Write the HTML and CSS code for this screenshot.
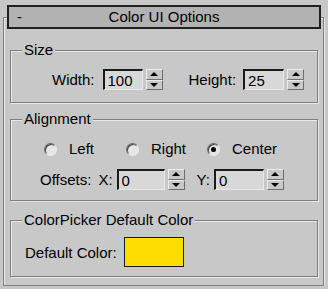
FILE: index.html
```html
<!DOCTYPE html>
<html>
<head>
    <title>Color UI Options</title>
    <link rel="stylesheet" href="styles.css">
</head>
<body>
    <div class="rollout">
        <div class="rollout-title">
            <span class="collapse">-</span>
            <span class="title-text">Color UI Options</span>
        </div>

        <div class="group group-size">
            <div class="group-label">Size</div>
            <div class="row">
                <span class="label lbl-width">Width:</span>
                <input type="text" class="field f-width" value="100">
                <div class="spinner"><div class="spin up"></div><div class="spin down"></div></div>
                <span class="label lbl-height">Height:</span>
                <input type="text" class="field f-height" value="25">
                <div class="spinner"><div class="spin up"></div><div class="spin down"></div></div>
            </div>
        </div>

        <div class="group group-align">
            <div class="group-label">Alignment</div>
            <div class="radios">
                <label class="radio"><input type="radio" name="align"><span>Left</span></label>
                <label class="radio"><input type="radio" name="align"><span>Right</span></label>
                <label class="radio"><input type="radio" name="align" checked><span>Center</span></label>
            </div>
            <div class="row offsets">
                <span class="label lbl-offsets">Offsets:</span>
                <span class="label lbl-x">X:</span>
                <input type="text" class="field f-x" value="0">
                <div class="spinner"><div class="spin up"></div><div class="spin down"></div></div>
                <span class="label lbl-y">Y:</span>
                <input type="text" class="field f-y" value="0">
                <div class="spinner"><div class="spin up"></div><div class="spin down"></div></div>
            </div>
        </div>

        <div class="group group-color">
            <div class="group-label">ColorPicker Default Color</div>
            <div class="row color-row">
                <span class="label lbl-color">Default Color:</span>
                <div class="swatch"></div>
            </div>
        </div>
    </div>
</body>
</html>
```

FILE: styles.css
```css
body {
    margin: 0;
    background: #c8c8c8;
    color: #000;
    font-family: "Liberation Sans", Arial, sans-serif;
    font-size: 15px;
}
.rollout {
    margin: 17px 4px 0 3px;
    padding-bottom: 8px;
    border: 1px solid #7f7f7f;
    box-shadow: inset 1px 1px 0 #e8e8e8, 1px 1px 0 #e8e8e8;
}
.rollout-title {
    margin: -13px 2px 0 3px;
    height: 20px;
    line-height: 20px;
    border: 2px solid #202020;
    background: #b2b2b2;
    display: flex;
    position: relative;
}
.collapse {
    width: 20px;
    padding-left: 8px;
}
.title-text {
    flex: 1;
    text-align: center;
    padding-right: 28px;
}
.group {
    margin: 0 5px 0 6px;
    border: 1px solid #7f7f7f;
    box-shadow: inset 1px 1px 0 #e8e8e8, 1px 1px 0 #e8e8e8;
}
.group-size {
    margin-top: 21px;
    padding-bottom: 12px;
}
.group-align {
    margin-top: 16px;
    padding-bottom: 10px;
}
.group-color {
    margin-top: 19px;
    padding-bottom: 9px;
}
.group-label {
    display: table;
    margin: -9px 0 0 11px;
    padding: 0 2px;
    height: 16px;
    line-height: 16px;
    background: #c8c8c8;
}
.row {
    display: flex;
    align-items: center;
    height: 21px;
    margin-top: 11px;
}
.label {
    line-height: 21px;
    white-space: nowrap;
}
.lbl-width { margin-left: 41px; }
.lbl-height { margin-left: 26px; }
.field {
    box-sizing: border-box;
    height: 21px;
    margin: 0;
    padding: 1px 0 0 3px;
    border-style: solid;
    border-width: 2px 1px 1px 2px;
    border-color: #1a1a1a #e8e8e8 #e8e8e8 #1a1a1a;
    background: #d8d8d8;
    font-family: inherit;
    font-size: 15px;
    color: #000;
    outline: none;
}
.f-width { width: 40px; margin-left: 8px; }
.f-height { width: 41px; margin-left: 7px; }
.spinner {
    width: 17px;
    height: 21px;
    margin-left: 3px;
    display: flex;
    flex-direction: column;
}
.spin {
    flex: 1;
    box-sizing: border-box;
    border-style: solid;
    border-width: 1px;
    border-color: #ececec #6e6e6e #6e6e6e #ececec;
    background: #c8c8c8;
    display: flex;
    align-items: center;
    justify-content: center;
}
.spin::after {
    content: '';
    width: 0;
    height: 0;
    border-left: 4px solid transparent;
    border-right: 4px solid transparent;
}
.spin.up::after { border-bottom: 4px solid #000; }
.spin.down::after { border-top: 4px solid #000; }
.radios {
    display: grid;
    grid-template-columns: 82px 81px auto;
    margin: 13px 0 0 33px;
    height: 18px;
}
.radio {
    display: flex;
    align-items: center;
    gap: 12px;
    line-height: 18px;
}
.radio input {
    appearance: none;
    -webkit-appearance: none;
    box-sizing: border-box;
    width: 13px;
    height: 13px;
    margin: 0;
    border-radius: 50%;
    border: 1px solid;
    border-color: #6a6a6a #ececec #ececec #6a6a6a;
    background: #e6e6e6;
    box-shadow: inset 1px 1px 0 #404040;
    display: flex;
    align-items: center;
    justify-content: center;
}
.radio input:checked::after {
    content: '';
    width: 5px;
    height: 5px;
    border-radius: 50%;
    background: #000;
}
.offsets { margin-top: 11px; }
.lbl-offsets { margin-left: 29px; }
.lbl-x { margin-left: 7px; }
.f-x { width: 48px; margin-left: 4px; }
.lbl-y { margin-left: 12px; }
.f-y { width: 50px; margin-left: 4px; }
.color-row {
    height: 30px;
    margin-top: 9px;
}
.lbl-color { margin-left: 14px; }
.swatch {
    box-sizing: border-box;
    width: 60px;
    height: 30px;
    margin-left: 7px;
    border: 1px solid #1a1a1a;
    background: #ffdd00;
}
```
